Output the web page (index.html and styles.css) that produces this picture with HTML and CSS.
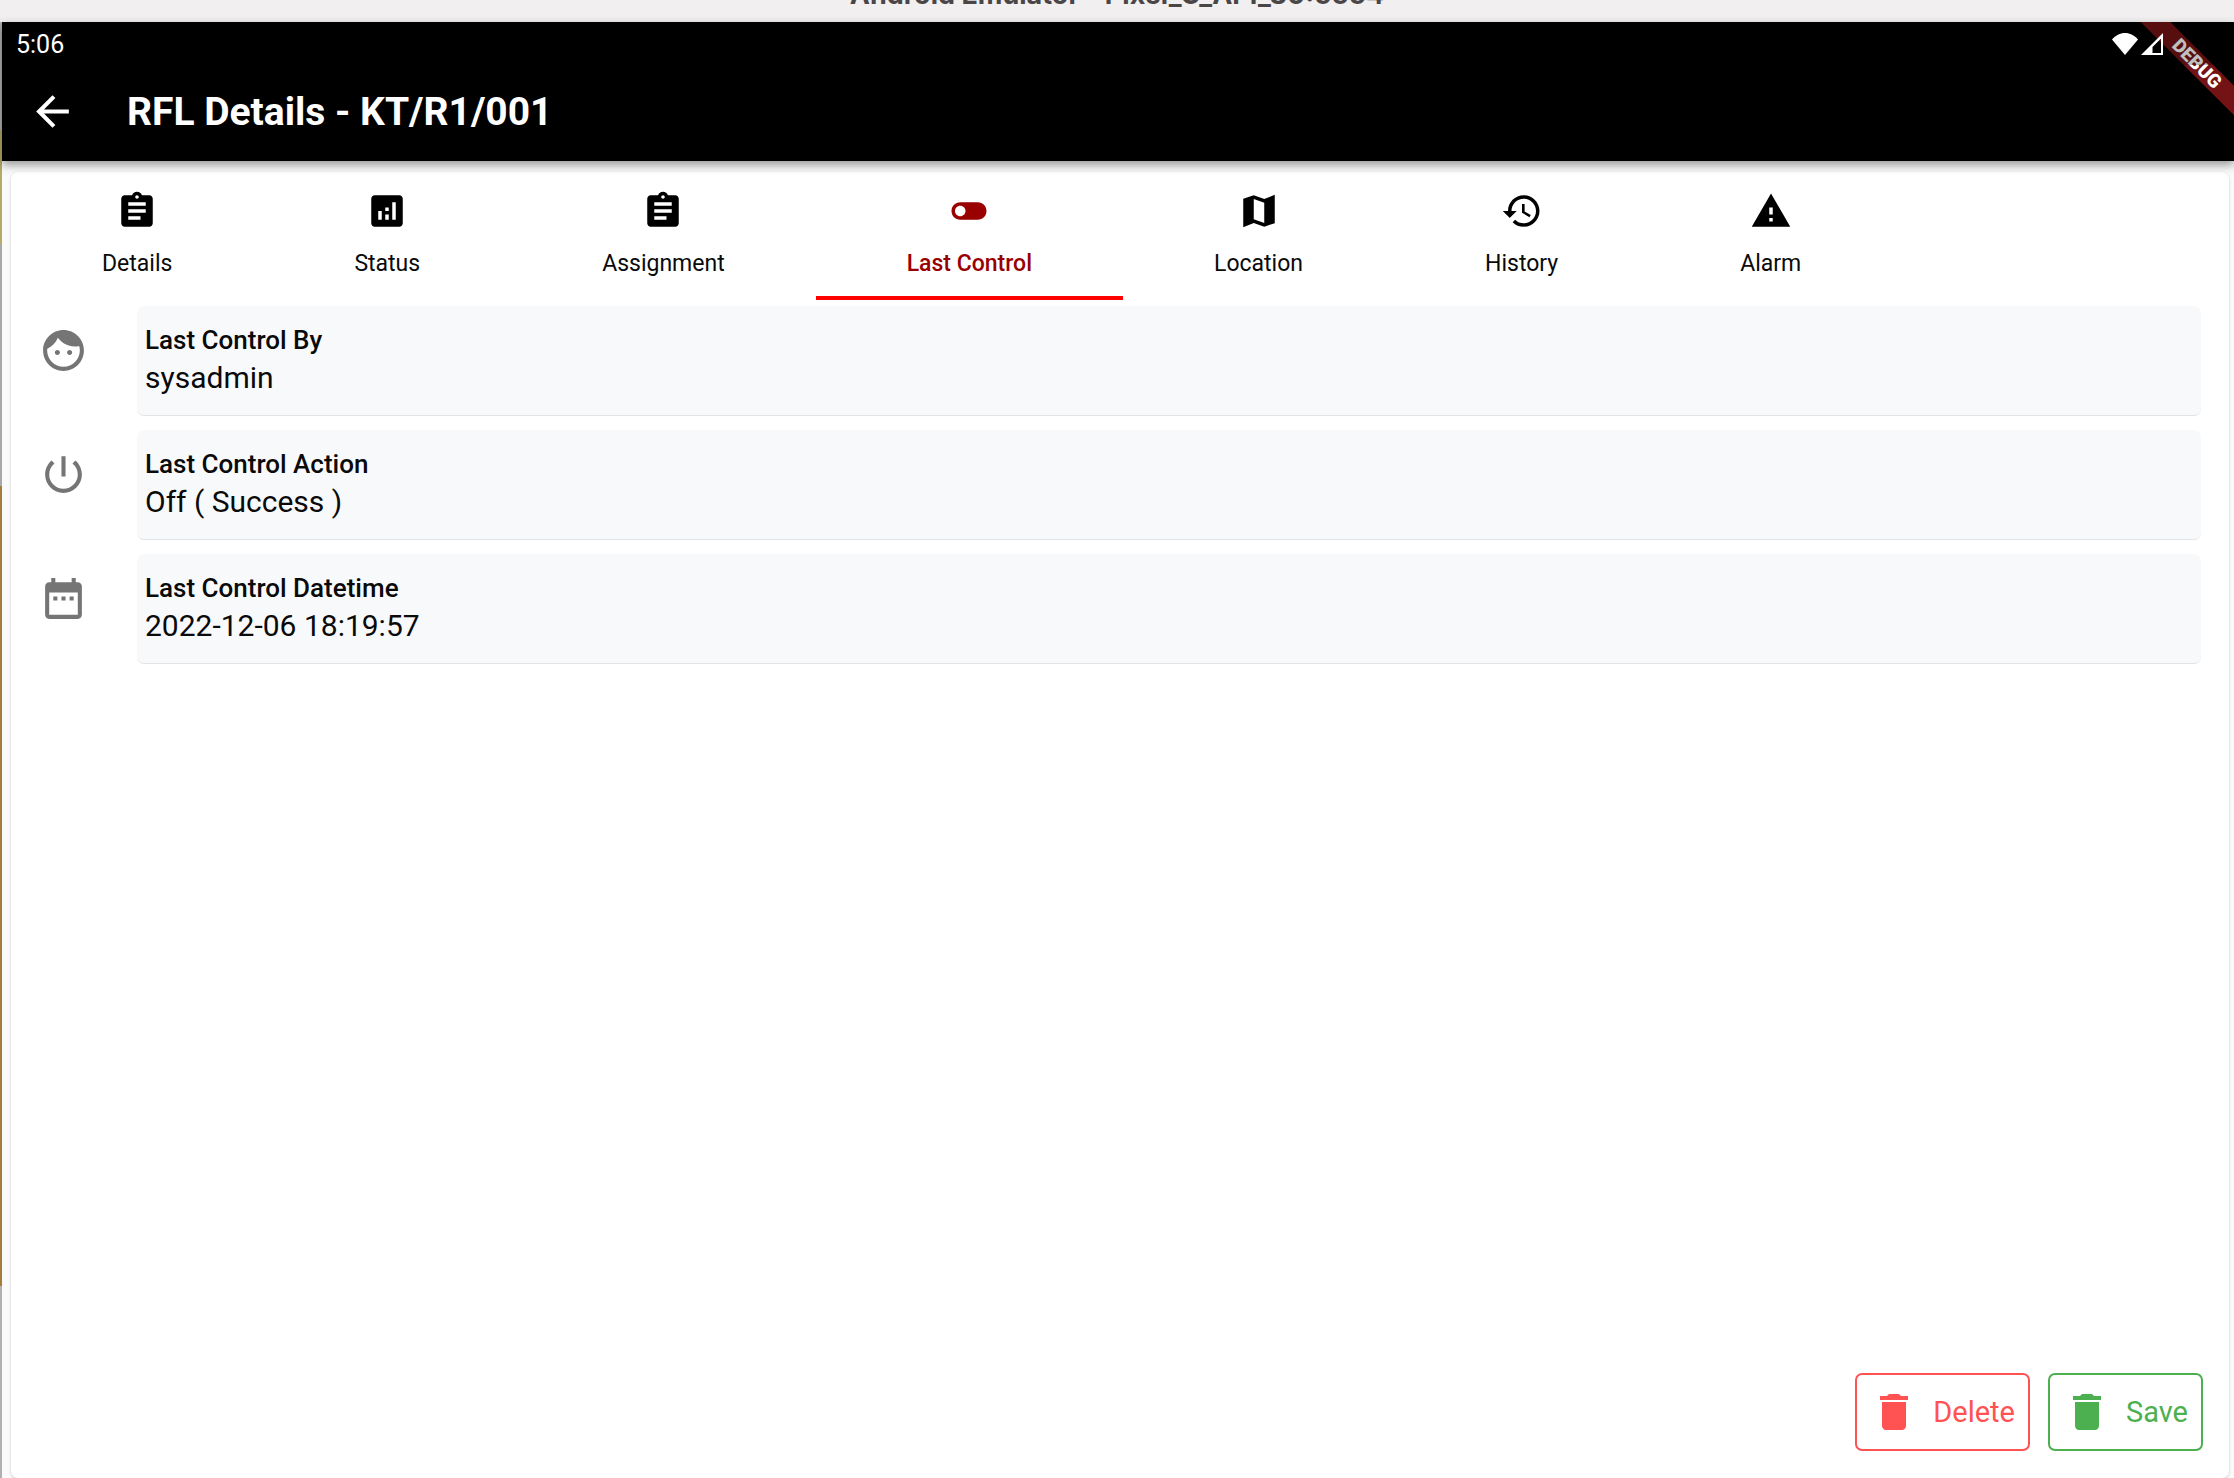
FILE: index.html
```html
<!DOCTYPE html>
<html lang="en">
<head>
<meta charset="utf-8">
<title>RFL Details - KT/R1/001</title>
<link rel="stylesheet" href="styles.css">
</head>
<body>
<div class="window-title"><span>Android Emulator - Pixel_C_API_30:5554</span></div>
<div class="device">
  <div class="desktop-edge"></div>
  <div class="app">
    <header class="top">
      <div class="status-bar">
        <span>5:06</span>
        <span class="signals">
          <svg class="wifi" viewBox="0 0 26 22"><path d="M13 22 0 6.500C3.500 2.500 8 0 13 0s9.500 2.500 13 6.500z"/></svg>
          <svg class="cell" viewBox="0 0 22 22"><path fill-rule="evenodd" d="M22 0v22H0zM20 5.500 11.500 14v6H20z"/></svg>
        </span>
      </div>
      <div class="app-bar">
        <button class="back" type="button" aria-label="Back"><svg viewBox="0 0 24 24"><path d="M20 11H7.830l5.590-5.590L12 4l-8 8 8 8 1.410-1.410L7.830 13H20v-2z"/></svg></button>
        <h1>RFL Details - KT/R1/001</h1>
      </div>
      <div class="ribbon-clip"><div class="ribbon">DEBUG</div></div>
    </header>
    <main class="card">
      <nav class="tabs">
        <button class="tab" type="button"><svg viewBox="0 0 24 24"><path d="M19 3h-4.180C14.400 1.840 13.300 1 12 1c-1.300 0-2.400.84-2.820 2H5c-1.100 0-2 .9-2 2v14c0 1.100.9 2 2 2h14c1.100 0 2-.9 2-2V5c0-1.100-.9-2-2-2zm-7 0c.55 0 1 .45 1 1s-.45 1-1 1-1-.45-1-1 .45-1 1-1zm2 14H7v-2h7v2zm3-4H7v-2h10v2zm0-4H7V7h10v2z"/></svg>Details</button>
        <button class="tab" type="button"><svg viewBox="0 0 24 24"><path d="M19 3H5c-1.100 0-2 .9-2 2v14c0 1.100.9 2 2 2h14c1.100 0 2-.9 2-2V5c0-1.100-.9-2-2-2zM9 17H7v-5h2v5zm4 0h-2v-3h2v3zm0-5h-2v-2h2v2zm4 5h-2V7h2v10z"/></svg>Status</button>
        <button class="tab" type="button"><svg viewBox="0 0 24 24"><path d="M19 3h-4.180C14.400 1.840 13.300 1 12 1c-1.300 0-2.400.84-2.820 2H5c-1.100 0-2 .9-2 2v14c0 1.100.9 2 2 2h14c1.100 0 2-.9 2-2V5c0-1.100-.9-2-2-2zm-7 0c.55 0 1 .45 1 1s-.45 1-1 1-1-.45-1-1 .45-1 1-1zm2 14H7v-2h7v2zm3-4H7v-2h10v2zm0-4H7V7h10v2z"/></svg>Assignment</button>
        <button class="tab active" type="button" aria-current="page"><svg viewBox="0 0 24 24"><path d="M17 7H7c-2.760 0-5 2.240-5 5s2.240 5 5 5h10c2.760 0 5-2.240 5-5s-2.240-5-5-5zM7 15c-1.660 0-3-1.340-3-3s1.340-3 3-3 3 1.340 3 3-1.340 3-3 3z"/></svg>Last Control</button>
        <button class="tab" type="button"><svg viewBox="0 0 24 24"><path d="M15 5.100 9 3 3 5.020v16.200l6-2.330 6 2.100 6-2.020V2.770L15 5.100zm0 13.790-6-2.110V5.110l6 2.110v11.670z"/></svg>Location</button>
        <button class="tab" type="button"><svg viewBox="0 0 24 24"><path d="M13 3c-4.970 0-9 4.030-9 9H1l3.890 3.890.07.14L9 12H6c0-3.870 3.130-7 7-7s7 3.130 7 7-3.130 7-7 7c-1.930 0-3.680-.79-4.940-2.060l-1.420 1.420C8.270 19.990 10.510 21 13 21c4.970 0 9-4.030 9-9s-4.030-9-9-9zm-1 5v5l4.280 2.540.72-1.210-3.500-2.080V8H12z"/></svg>History</button>
        <button class="tab" type="button"><svg viewBox="0 0 24 24"><path d="M1 21h22L12 2 1 21zm12-3h-2v-2h2v2zm0-4h-2v-4h2v4z"/></svg>Alarm</button>
      </nav>
      <dl class="fields">
        <div class="row">
          <svg viewBox="0 0 24 24"><path d="M9 11.750c-.69 0-1.250.56-1.250 1.250s.56 1.250 1.250 1.250 1.250-.56 1.250-1.250-.56-1.250-1.250-1.250zm6 0c-.69 0-1.250.56-1.250 1.250s.56 1.250 1.250 1.250 1.250-.56 1.250-1.250-.56-1.250-1.250-1.250zM12 2C6.480 2 2 6.480 2 12s4.480 10 10 10 10-4.480 10-10S17.520 2 12 2zm0 18c-4.410 0-8-3.590-8-8 0-.29.02-.58.05-.86 2.360-1.050 4.230-2.980 5.210-5.370C11.070 8.330 14.050 10 17.420 10c.78 0 1.530-.09 2.250-.26.21.71.33 1.470.33 2.260 0 4.410-3.590 8-8 8z"/></svg>
          <div class="field"><dt>Last Control By</dt><dd>sysadmin</dd></div>
        </div>
        <div class="row">
          <svg viewBox="0 0 24 24"><path d="M13 3h-2v10h2V3zm4.830 2.170-1.420 1.420C17.990 7.860 19 9.810 19 12c0 3.870-3.130 7-7 7s-7-3.130-7-7c0-2.190 1.010-4.140 2.580-5.420L6.170 5.170C4.230 6.820 3 9.260 3 12c0 4.970 4.030 9 9 9s9-4.030 9-9c0-2.740-1.230-5.180-3.170-6.830z"/></svg>
          <div class="field"><dt>Last Control Action</dt><dd>Off ( Success )</dd></div>
        </div>
        <div class="row">
          <svg viewBox="0 0 24 24"><path d="M9 11H7v2h2v-2zm4 0h-2v2h2v-2zm4 0h-2v2h2v-2zm2-7h-1V2h-2v2H8V2H6v2H5c-1.110 0-1.990.9-1.990 2L3 20c0 1.100.89 2 2 2h14c1.100 0 2-.9 2-2V6c0-1.100-.9-2-2-2zm0 16H5V9h14v11z"/></svg>
          <div class="field"><dt>Last Control Datetime</dt><dd>2022-12-06 18:19:57</dd></div>
        </div>
      </dl>
      <footer class="actions">
        <button class="action delete" type="button"><svg viewBox="0 0 24 24"><path d="M6 19c0 1.100.9 2 2 2h8c1.100 0 2-.9 2-2V7H6v12zM19 4h-3.500l-1-1h-5l-1 1H5v2h14V4z"/></svg>Delete</button>
        <button class="action save" type="button"><svg viewBox="0 0 24 24"><path d="M6 19c0 1.100.9 2 2 2h8c1.100 0 2-.9 2-2V7H6v12zM19 4h-3.500l-1-1h-5l-1 1H5v2h14V4z"/></svg>Save</button>
      </footer>
    </main>
  </div>
</div>
</body>
</html>
```
FILE: styles.css
```css
* { box-sizing: border-box; }

body {
  margin: 0;
  min-height: 100vh;
  display: flex;
  flex-direction: column;
  font-family: Roboto, "Liberation Sans", sans-serif;
  color: #0a0a0a;
  background: #fafafa;
}

svg { display: block; fill: currentColor; flex: none; }
button { font: inherit; color: inherit; background: none; border: 0; padding: 0; }

.window-title {
  height: 22px;
  overflow: hidden;
  display: flex;
  align-items: flex-end;
  justify-content: center;
  background: #f1eff0;
  color: #4a4648;
  font: bold 27px/32px Inter, sans-serif;
}
.window-title span { padding-bottom: 11px; }

.device { flex: 1; display: flex; }
.desktop-edge {
  width: 2px;
  background: linear-gradient(#b0b0b0 108px, #b3ab66 108px 222px, #a8a8a8 222px 464px, #a67c3c 464px 1264px, #b0b0b0 1264px);
}
.app { flex: 1; min-width: 0; display: flex; flex-direction: column; }

.top {
  position: relative;
  z-index: 1;
  background: #000;
  color: #fff;
  box-shadow: 0 4px 9px rgba(0, 0, 0, 0.4);
}
.status-bar {
  position: relative;
  z-index: 2;
  height: 43px;
  padding: 1px 71px 0 14px;
  display: flex;
  align-items: center;
  justify-content: space-between;
  font-size: 25px;
  background: rgba(0, 0, 0, 0.25);
}
.signals { display: flex; gap: 3px; }
.wifi { width: 26px; height: 22px; }
.cell { width: 22px; height: 22px; }
.app-bar {
  height: 96px;
  padding: 0 26px 3px;
  display: flex;
  align-items: center;
  gap: 50px;
}
.back svg { width: 49px; height: 49px; }
.app-bar h1 { margin: 0; font-size: 39px; line-height: 48px; font-weight: 700; }

.ribbon-clip {
  position: absolute;
  z-index: 1;
  top: 0;
  right: 0;
  width: 100px;
  height: 100px;
  overflow: hidden;
}
.ribbon {
  position: absolute;
  top: 31px;
  right: -53px;
  width: 180px;
  height: 21px;
  transform: rotate(45deg);
  background: #741315;
  text-align: center;
  font-size: 19px;
  line-height: 21px;
  font-weight: 900;
}

.card {
  flex: 1;
  margin: 11px 5px 0 9px;
  display: flex;
  flex-direction: column;
  background: #fff;
  border-radius: 7px;
  box-shadow: 0 1px 3px rgba(0, 0, 0, 0.2);
}

.tabs { display: flex; }
.tab {
  padding: 18px 91px 18px;
  display: flex;
  flex-direction: column;
  align-items: center;
  gap: 18px;
  font-size: 23px;
  line-height: 28px;
  border-bottom: 4px solid transparent;
}
.tab svg { width: 42px; height: 42px; color: #000; }
.tab.active { color: #900; font-weight: 500; border-color: #f00; }
.tab.active svg { color: #900; }

.fields {
  margin: 0;
  padding: 6px 28px 0 28px;
  display: flex;
  flex-direction: column;
  gap: 14px;
}
.row { display: flex; align-items: flex-start; gap: 49px; }
.row > svg { width: 49px; height: 49px; margin-top: 20px; color: #757575; }
.field {
  flex: 1;
  padding: 18px 8px 17px;
  background: #f8f9fb;
  border-bottom: 1px solid #e2e4e6;
  border-radius: 7px;
}
.field dt { font-size: 26px; line-height: 33px; font-weight: 500; }
.field dd { margin: 0; font-size: 30px; line-height: 41px; }

.actions {
  margin-top: auto;
  padding: 0 26px 27px;
  display: flex;
  justify-content: flex-end;
  gap: 18px;
}
.action {
  padding: 13px 13px;
  display: flex;
  align-items: center;
  gap: 15px;
  font-size: 29px;
  border: 2px solid;
  border-radius: 7px;
}
.action svg { width: 48px; height: 48px; }
.delete { color: #ff5252; }
.save { color: #4caf50; }
```
